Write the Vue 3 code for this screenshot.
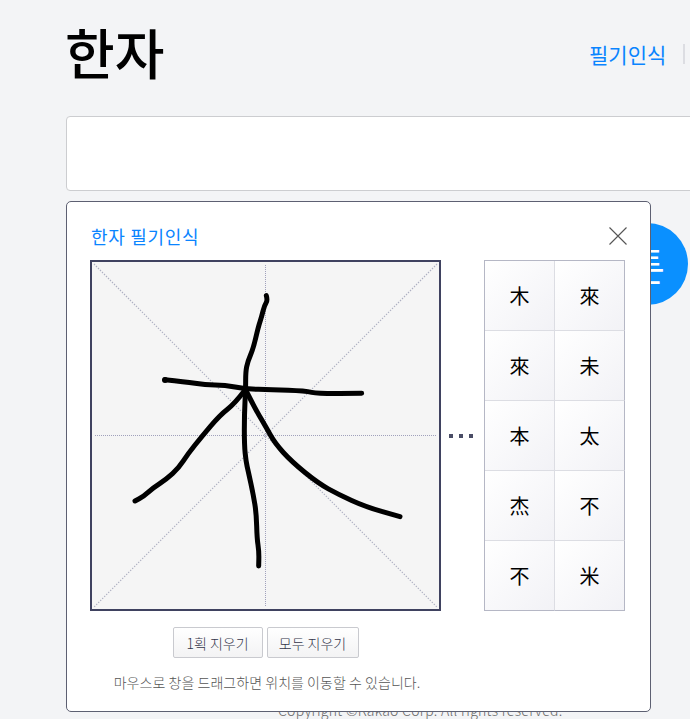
<script setup>
const candidates = ['木', '來', '來', '未', '本', '太', '杰', '不', '不', '米']
const lines = [
  [[544, 122], [548, 136], [538, 152], [530, 185], [520, 215], [505, 280], [488, 320], [482, 350], [482, 400], [478, 480], [478, 570], [483, 620], [490, 650], [505, 720], [514, 775], [516, 850], [522, 890], [521, 933]],
  [[240, 374], [300, 380], [360, 390], [420, 390], [480, 402], [560, 404], [660, 408], [700, 416], [830, 415]],
  [[480, 405], [450, 445], [405, 480], [350, 545], [310, 595], [280, 640], [245, 672], [205, 698], [175, 725], [150, 738]],
  [[482, 405], [510, 460], [545, 520], [570, 565], [620, 620], [700, 685], [760, 718], [840, 755], [945, 785]]
]
const smooth = (pts) => {
  let d = `M${pts[0][0]} ${pts[0][1]}`
  for (let i = 1; i < pts.length - 1; i++) {
    const mx = (pts[i][0] + pts[i + 1][0]) / 2
    const my = (pts[i][1] + pts[i + 1][1]) / 2
    d += ` Q${pts[i][0]} ${pts[i][1]} ${mx} ${my}`
  }
  const last = pts[pts.length - 1]
  return d + ` L${last[0]} ${last[1]}`
}
const strokes = lines.map(smooth)
</script>

<template>
  <div class="page">
    <header class="top">
      <h1 class="title">한자</h1>
      <nav class="nav">
        <a class="nav-link">필기인식</a>
        <span class="nav-sep"></span>
      </nav>
    </header>
    <div class="search-box"></div>
    <div class="search-row">
      <button class="search-btn">튼</button>
    </div>
    <div class="foot-links">
      <span class="foot-sep"></span>
      <span class="foot-link">공지사항</span>
    </div>
    <p class="copyright">Copyright ©Kakao Corp. All rights reserved.</p>

    <section class="dialog">
      <div class="dialog-head">
        <h2 class="dialog-title">한자 필기인식</h2>
        <svg class="close" viewBox="0 0 18 18" width="18" height="18">
          <path d="M0.5 0.5 L17.5 17.5 M17.5 0.5 L0.5 17.5" stroke="#555" stroke-width="1.1" fill="none" />
        </svg>
      </div>
      <div class="work">
        <div class="canvas">
          <svg viewBox="21 21 1041 1041" width="347" height="347" class="ink">
            <path d="M27 27 L1056 1056 M1056 27 L27 1056" stroke="#aeb0c2" stroke-width="3.4" stroke-dasharray="4.24 4.24" fill="none" />
            <path d="M30 541.5 H1056 M541.5 30 V1056" stroke="#a0a1bc" stroke-width="3" stroke-dasharray="3 3" fill="none" />
            <path v-for="d in strokes" :key="d" :d="d" stroke="#000" stroke-width="15" stroke-linecap="round" stroke-linejoin="round" fill="none" />
            <circle cx="240" cy="375" r="9" fill="#000" />
          </svg>
        </div>
        <div class="dots"><i></i><i></i><i></i></div>
        <div class="grid">
          <button v-for="(c, i) in candidates" :key="i" class="cell">{{ c }}</button>
        </div>
      </div>
      <div class="under">
        <div class="btns">
          <button class="btn one">1획 지우기</button>
          <button class="btn two">모두 지우기</button>
        </div>
        <p class="hint">마우스로 창을 드래그하면 위치를 이동할 수 있습니다.</p>
      </div>
    </section>
  </div>
</template>

<style scoped>
.page {
  position: relative;
  width: 690px;
  height: 719px;
  overflow: hidden;
  box-sizing: border-box;
  padding-left: 66px;
  background: #f3f4f6;
  font-family: "Noto Sans CJK KR", "Noto Sans", sans-serif;
}
.top {
  display: flex;
  align-items: flex-start;
  justify-content: space-between;
  height: 116px;
}
.title {
  margin: 14px 0 0 -1px;
  font-size: 54px;
  line-height: 76px;
  font-weight: 500;
  color: #000;
  letter-spacing: 0;
}
.nav {
  display: flex;
  align-items: center;
  width: 101px;
  flex: none;
  margin-top: 39px;
}
.nav-link {
  font-size: 21px;
  line-height: 30px;
  color: #0a84ff;
  white-space: nowrap;
}
.nav-sep {
  width: 2px;
  height: 20px;
  margin-left: 17px;
  background: #dcdde2;
}
.search-box {
  box-sizing: border-box;
  width: 700px;
  height: 75px;
  background: #fff;
  border: 1px solid #cccdd0;
  border-radius: 4px;
}
.search-row {
  display: flex;
  justify-content: flex-end;
  padding: 32px 2px 0 0;
}
.search-btn {
  width: 82px;
  height: 82px;
  padding: 0;
  border: 0;
  border-radius: 50%;
  background: #0a90ff;
  color: #fff;
  font-family: inherit;
  font-size: 39px;
  font-weight: 400;
  line-height: 1;
}
.foot-links {
  display: flex;
  align-items: center;
  justify-content: flex-end;
  width: 700px;
  height: 20px;
  margin-top: 360px;
  gap: 20px;
  white-space: nowrap;
}
.foot-sep {
  flex: none;
  width: 1px;
  height: 14px;
  background: #d8d9de;
}
.foot-link {
  flex: none;
  width: 23px;
  overflow: hidden;
  font-size: 13px;
  color: #555;
}
.copyright {
  position: absolute;
  left: 278px;
  top: 700px;
  margin: 0;
  font-size: 14px;
  font-weight: 300;
  line-height: 20px;
  letter-spacing: 0.3px;
  color: #666;
  white-space: nowrap;
}
.dialog {
  position: absolute;
  left: 66px;
  top: 201px;
  box-sizing: border-box;
  width: 585px;
  height: 511px;
  padding: 0 25px 0 23px;
  background: #fff;
  border: 1px solid #5d6072;
  border-radius: 5px;
}
.dialog-head {
  display: flex;
  align-items: center;
  justify-content: space-between;
  height: 58px;
  padding-left: 1px;
}
.dialog-title {
  margin: 10px 0 0;
  font-size: 18px;
  font-weight: 400;
  letter-spacing: 0.7px;
  color: #0a84ff;
}
.close {
  margin: 9px -2px 0 0;
}
.work {
  display: flex;
  align-items: center;
}
.canvas {
  flex: none;
  box-sizing: border-box;
  width: 351px;
  height: 351px;
  border: 2px solid #3f4260;
  background: #f5f5f5;
}
.ink {
  display: block;
}
.dots {
  flex: none;
  display: flex;
  gap: 6px;
  width: 35px;
  margin-left: 8px;
}
.dots i {
  width: 4px;
  height: 4px;
  background: #4a4d66;
}
.grid {
  display: grid;
  grid-template-columns: repeat(2, 70px);
  grid-auto-rows: 70px;
  box-sizing: content-box;
  border-top: 1px solid #b5b7c5;
  border-left: 1px solid #b5b7c5;
}
.cell {
  padding: 0;
  border: 0;
  border-right: 1px solid #dcdde3;
  border-bottom: 1px solid #dcdde3;
  background: linear-gradient(135deg, #fff 0%, #f2f2f6 100%);
  color: #000;
  font-family: inherit;
  font-size: 20px;
  line-height: 1;
}
.cell:nth-child(2n) {
  border-right-color: #b5b7c5;
}
.cell:nth-last-child(-n + 2) {
  border-bottom-color: #b5b7c5;
}
.under {
  width: 351px;
  text-align: center;
}
.btns {
  display: flex;
  justify-content: center;
  gap: 4px;
  padding-top: 16px;
}
.btn {
  box-sizing: border-box;
  height: 31px;
  padding: 0;
  border: 1px solid #c9cacf;
  border-radius: 2px;
  background: linear-gradient(#fff, #f3f3f4);
  color: #33354a;
  font-family: inherit;
  font-size: 14px;
  font-weight: 300;
  line-height: 1;
}
.one { width: 90px; }
.two { width: 92px; }
.hint {
  margin: 14px 0 0;
  padding-left: 3px;
  font-size: 14px;
  font-weight: 300;
  line-height: 20px;
  letter-spacing: 0.04px;
  color: #555;
  white-space: nowrap;
}
</style>

<style>
html, body { margin: 0; background: #f3f4f6; }
</style>
